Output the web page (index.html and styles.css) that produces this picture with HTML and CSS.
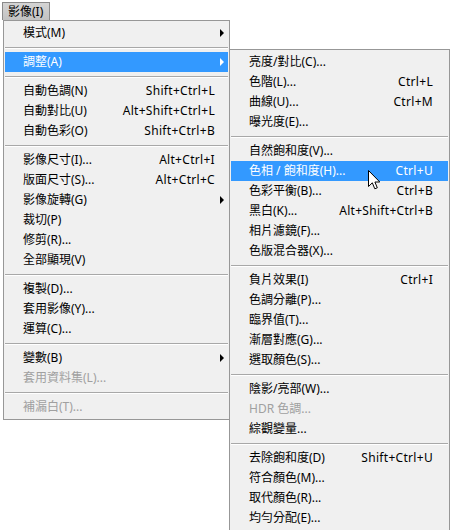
FILE: index.html
```html
<!DOCTYPE html>
<html lang="zh-Hant">
<head>
  <meta charset="UTF-8">
  <title>影像 選單</title>
  <link rel="stylesheet" href="styles.css">
</head>
<body>
  <div class="screen">
    <div class="menubar">
      <span class="menu-title">影像(I)</span>
    </div>

    <!-- 影像 menu -->
    <div class="menu main-menu">
      <div class="item has-sub"><span>模式(M)</span></div>
      <div class="sep"></div>
      <div class="item has-sub active"><span>調整(A)</span></div>
      <div class="sep"></div>
      <div class="item"><span>自動色調(N)</span><span class="key">Shift+Ctrl+L</span></div>
      <div class="item"><span>自動對比(U)</span><span class="key">Alt+Shift+Ctrl+L</span></div>
      <div class="item"><span>自動色彩(O)</span><span class="key">Shift+Ctrl+B</span></div>
      <div class="sep"></div>
      <div class="item"><span>影像尺寸(I)...</span><span class="key">Alt+Ctrl+I</span></div>
      <div class="item"><span>版面尺寸(S)...</span><span class="key">Alt+Ctrl+C</span></div>
      <div class="item has-sub"><span>影像旋轉(G)</span></div>
      <div class="item"><span>裁切(P)</span></div>
      <div class="item"><span>修剪(R)...</span></div>
      <div class="item"><span>全部顯現(V)</span></div>
      <div class="sep"></div>
      <div class="item"><span>複製(D)...</span></div>
      <div class="item"><span>套用影像(Y)...</span></div>
      <div class="item"><span>運算(C)...</span></div>
      <div class="sep"></div>
      <div class="item has-sub"><span>變數(B)</span></div>
      <div class="item disabled"><span>套用資料集(L)...</span></div>
      <div class="sep"></div>
      <div class="item disabled"><span>補漏白(T)...</span></div>
    </div>

    <!-- 調整 submenu -->
    <div class="menu sub-menu">
      <div class="item"><span>亮度/對比(C)...</span></div>
      <div class="item"><span>色階(L)...</span><span class="key">Ctrl+L</span></div>
      <div class="item"><span>曲線(U)...</span><span class="key">Ctrl+M</span></div>
      <div class="item"><span>曝光度(E)...</span></div>
      <div class="sep"></div>
      <div class="item"><span>自然飽和度(V)...</span></div>
      <div class="item active"><span>色相 / 飽和度(H)...</span><span class="key">Ctrl+U</span></div>
      <div class="item"><span>色彩平衡(B)...</span><span class="key">Ctrl+B</span></div>
      <div class="item"><span>黑白(K)...</span><span class="key">Alt+Shift+Ctrl+B</span></div>
      <div class="item"><span>相片濾鏡(F)...</span></div>
      <div class="item"><span>色版混合器(X)...</span></div>
      <div class="sep"></div>
      <div class="item"><span>負片效果(I)</span><span class="key">Ctrl+I</span></div>
      <div class="item"><span>色調分離(P)...</span></div>
      <div class="item"><span>臨界值(T)...</span></div>
      <div class="item"><span>漸層對應(G)...</span></div>
      <div class="item"><span>選取顏色(S)...</span></div>
      <div class="sep"></div>
      <div class="item"><span>陰影/亮部(W)...</span></div>
      <div class="item disabled"><span>HDR 色調...</span></div>
      <div class="item"><span>綜觀變量...</span></div>
      <div class="sep"></div>
      <div class="item"><span>去除飽和度(D)</span><span class="key">Shift+Ctrl+U</span></div>
      <div class="item"><span>符合顏色(M)...</span></div>
      <div class="item"><span>取代顏色(R)...</span></div>
      <div class="item"><span>均勻分配(E)...</span></div>
    </div>

    <!-- mouse pointer -->
    <svg class="cursor" width="13" height="20" viewBox="0 0 13 20">
      <path d="M0.5 0.5 L0.5 16.5 L4.3 12.8 L6.8 18.8 L9.3 17.8 L6.9 12 L11.8 12 Z" fill="#fff" stroke="#000" stroke-width="1" stroke-linejoin="miter"/>
    </svg>
  </div>
</body>
</html>
```

FILE: styles.css
```css
body {
  margin: 0;
  background: #fff;
  font-family: "Noto Sans", "Noto Sans CJK TC", sans-serif;
  font-size: 12px;
  color: #000;
}

.screen {
  position: relative;
  width: 451px;
  height: 530px;
  overflow: hidden;
}

.menubar {
  height: 20px;
  padding: 2px 0 0 2px;
  box-sizing: border-box;
}

.menu-title {
  display: inline-block;
  height: 18px;
  line-height: 17px;
  padding: 0 6px 0 5px;
  background: linear-gradient(#d4d4d4, #c2c2c2);
  border: 1px solid #8a8a8a;
  border-bottom: none;
  box-sizing: border-box;
  font-size: 12px;
}

.menu {
  background: #f0f0f0;
  border: 1px solid #979797;
  padding: 2px 1px;
  box-sizing: border-box;
}

.main-menu {
  margin-left: 3px;
  width: 227px;
}

.sub-menu {
  position: absolute;
  left: 229px;
  top: 49px;
  width: 221px;
}

.item {
  position: relative;
  display: flex;
  justify-content: space-between;
  height: 20px;
  line-height: 20px;
  padding: 0 13px 0 18px;
  white-space: nowrap;
}

.sub-menu .item {
  padding-right: 15px;
}

.key {
  letter-spacing: 0.3px;
}

.item.active {
  background: #3399ff;
  color: #fff;
}

.item.disabled {
  color: #a0a0a0;
}

.has-sub::after {
  content: "";
  position: absolute;
  right: 4px;
  top: 6px;
  border-left: 4px solid #000;
  border-top: 4px solid transparent;
  border-bottom: 4px solid transparent;
}

.has-sub.active::after {
  border-left-color: #fff;
}

.sep {
  margin: 4px 0 3px;
  border-top: 1px solid #a8a8a8;
  border-bottom: 1px solid #fff;
}

.cursor {
  position: absolute;
  left: 368px;
  top: 170px;
}
```
